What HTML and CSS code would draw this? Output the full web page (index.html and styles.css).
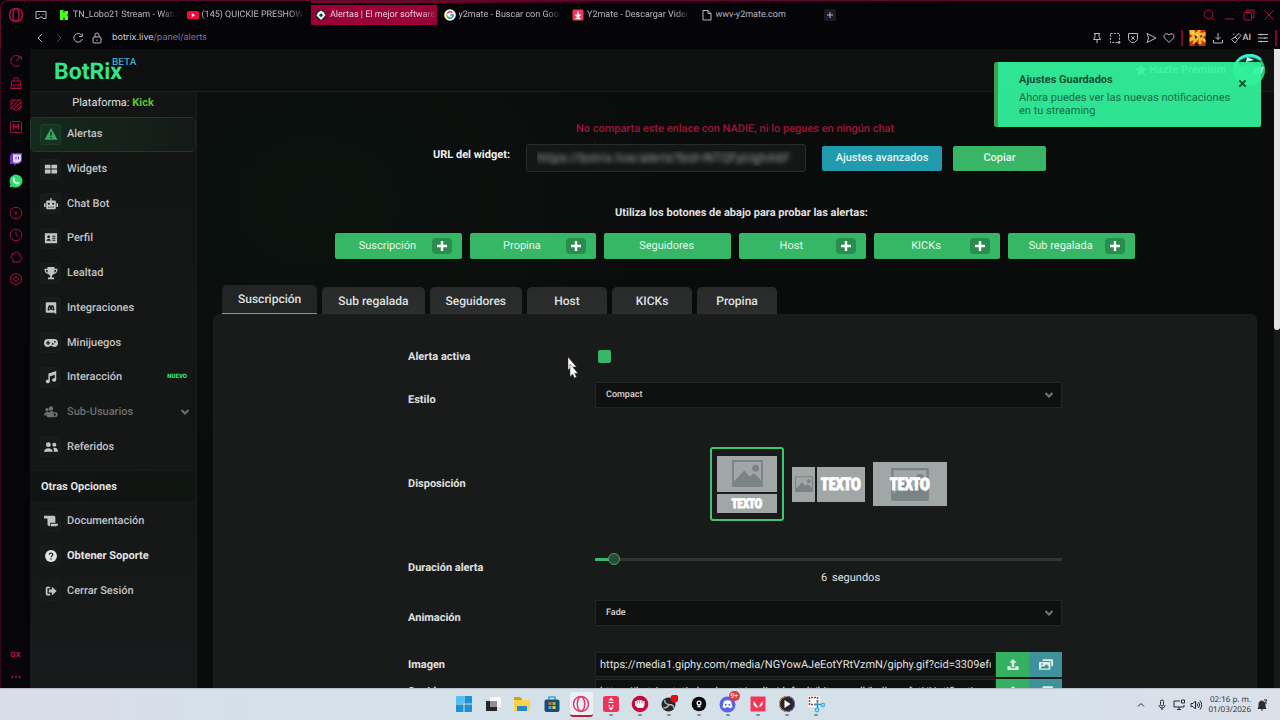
FILE: index.html
```html
<!DOCTYPE html>
<html lang="es">
<head>
<meta charset="utf-8">
<title>Alertas | BotRix</title>
<link rel="stylesheet" href="styles.css">
</head>
<body>
<svg class="defs" aria-hidden="true">
  <symbol id="plus" viewBox="0 0 10 10"><path d="M5 0v10M0 5h10" stroke="currentColor" stroke-width="2.4" fill="none"/></symbol>
  <symbol id="chev" viewBox="0 0 10 10"><path d="M1.500 3L5 6.500l3.500-3.500" stroke="currentColor" stroke-width="2" fill="none"/></symbol>
  <symbol id="upload" viewBox="0 0 14 14"><path d="M7 1l4 4.200H8.400V10H5.600V5.200H3z"/><path d="M1 9h3.500v2h5V9H13v4H1z"/></symbol>
  <symbol id="images" viewBox="0 0 16 14"><path d="M5 1h10a1 1 0 0 1 1 1v6a1 1 0 0 1-1 1h-1V5a2 2 0 0 0-2-2H4V2a1 1 0 0 1 1-1z"/><path fill-rule="evenodd" d="M1 4h11a1 1 0 0 1 1 1v7a1 1 0 0 1-1 1H1a1 1 0 0 1-1-1V5a1 1 0 0 1 1-1zm1 7.500h9V9L8.500 6.800 5.800 9.600 4.500 8.500 2 10.500zM3.300 5.500a1 1 0 1 0 0 2 1 1 0 0 0 0-2z"/></symbol>
  <symbol id="photo" viewBox="0 0 32 28"><path fill-rule="evenodd" d="M1 0h30a1 1 0 0 1 1 1v26a1 1 0 0 1-1 1H1a1 1 0 0 1-1-1V1a1 1 0 0 1 1-1zM2 2v20L12.500 11l6 6 4-3.500L30 21V2z"/><circle cx="24.500" cy="8.500" r="3.500"/></symbol>
</svg>

<header class="browser">
  <div class="tabbar">
    <button class="opera" aria-label="Opera"><svg viewBox="0 0 16 16"><circle cx="8" cy="8" r="6.500"/><ellipse cx="8" cy="8" rx="3" ry="6.200"/></svg></button>
    <button class="pane" aria-label="Espacio"><svg viewBox="0 0 12 12"><path d="M1 2.500h10v7H8L7 8H5L4 9.500H1zM3.500 5.500h1M7.500 5.500h1"/></svg></button>
    <nav class="tabs">
      <a href="#" class="tab"><svg viewBox="0 0 12 12"><path fill="#4dfb1c" d="M2 1h3.500v2.500h1V2H10v3L9 6l1 1v4H6.500V8.500h-1V11H2z"/></svg><span>TN_Lobo21 Stream - Watch</span></a>
      <a href="#" class="tab"><svg viewBox="0 0 12 12"><rect x="0" y="2" width="12" height="8.500" rx="2" fill="#f5073b"/><path d="M4.800 4.300v4L8 6.300z" fill="#fff"/></svg><span>(145) QUICKIE PRESHOW</span></a>
      <a href="#" class="tab current"><svg viewBox="0 0 12 12"><circle cx="6" cy="6" r="5.300" fill="#1c2023"/><path d="M3 3.500l3-2 3 2 1.500 3L6 11 1.500 6.500z" fill="#eef3f2"/><path d="M6 4.300l2 2-2 2-2-2z" fill="#24343a"/></svg><span>Alertas | El mejor software</span></a>
      <a href="#" class="tab"><svg viewBox="0 0 12 12"><circle cx="6" cy="6" r="5.800" fill="#fff"/><g fill="none" stroke-width="1.600"><path d="M8.300 3.700A3.200 3.200 0 0 0 3.200 4.500" stroke="#ea4335"/><path d="M3.200 4.500a3.200 3.200 0 0 0 0 3" stroke="#fbbc05"/><path d="M3.200 7.500A3.200 3.200 0 0 0 8.100 8.400" stroke="#34a853"/><path d="M8.100 8.400A3.200 3.200 0 0 0 9.200 6H6.200" stroke="#4285f4"/></g></svg><span>y2mate - Buscar con Google</span></a>
      <a href="#" class="tab"><svg viewBox="0 0 12 12"><rect x=".5" y=".5" width="11" height="11" rx="1.500" fill="#f0365b"/><path d="M6 2.500v4M3.500 5.500L6 8l2.500-2.500M3.500 9.500h5" stroke="#fff" stroke-width="1.500" fill="none"/></svg><span>Y2mate - Descargar Video</span></a>
      <a href="#" class="tab"><svg viewBox="0 0 12 12"><path stroke="#b9b8c0" d="M2 1.500h5L10 4.500v6.500H2zM7 1.500v3h3"/></svg><span>wwv-y2mate.com</span></a>
    </nav>
    <button class="newtab" aria-label="Nueva pestaña"><svg viewBox="0 0 10 10"><path d="M5 2v6M2 5h6"/></svg></button>
    <div class="winctl">
      <button aria-label="Buscar"><svg viewBox="0 0 12 12"><circle cx="5.500" cy="5.500" r="4.300"/><path d="M8.600 8.600L11 11"/></svg></button>
      <button aria-label="Minimizar"><svg viewBox="0 0 12 12"><path d="M2 10h9"/></svg></button>
      <button aria-label="Restaurar"><svg viewBox="0 0 12 12"><rect x="1" y="3.500" width="7.500" height="7.500" rx="1"/><path d="M3.500 3.500V1H11v7.500H8.500"/></svg></button>
      <button aria-label="Cerrar"><svg viewBox="0 0 12 12"><path d="M1.500 1.500l9 9M10.500 1.500l-9 9"/></svg></button>
    </div>
  </div>
  <div class="address">
    <div class="nav">
      <button aria-label="Atrás"><svg viewBox="0 0 12 12"><path d="M8 2L4 6l4 4"/></svg></button>
      <button class="dim" aria-label="Adelante"><svg viewBox="0 0 12 12"><path d="M4 2l4 4-4 4"/></svg></button>
      <button aria-label="Recargar"><svg viewBox="0 0 12 12"><path d="M9.800 3.500A4.300 4.300 0 1 0 10.300 7M10.300 1.500v3H7"/></svg></button>
      <button aria-label="Sitio seguro"><svg viewBox="0 0 12 12"><rect x="2" y="5" width="8" height="6" rx="1"/><path d="M4 5V3a2 2 0 0 1 4 0v2M6 7.500v1.500"/></svg></button>
    </div>
    <p class="url">botrix.live<span>/panel/alerts</span></p>
    <div class="tools">
      <button aria-label="Fijar"><svg viewBox="0 0 12 12"><path d="M3 1.500h6M4 1.500v3L2.500 7.500h7L8 4.500v-3M6 7.500V11"/></svg></button>
      <button aria-label="Captura"><svg viewBox="0 0 12 12"><path stroke-dasharray="2 1.300" d="M1.500 1.500h9v9h-9z"/><path d="M8.500 10.500h3M10 9v3"/></svg></button>
      <button aria-label="Bloqueador"><svg viewBox="0 0 12 12"><path d="M1.500 1.500h9v5c0 2-2 3.500-4.500 4.500C3.500 10 1.500 8.500 1.500 6.500zM4.300 4.300l3.400 3.400M7.700 4.300L4.300 7.700"/></svg></button>
      <button aria-label="Enviar"><svg viewBox="0 0 12 12"><path d="M2 1.500L11 6l-9 4.500L3.500 6z"/></svg></button>
      <button aria-label="Favorito"><svg viewBox="0 0 12 12"><path d="M6 10.500L1.500 6C-.5 3 3.500 0 6 3c2.500-3 6.500 0 4.500 3z"/></svg></button>
      <i class="bar"></i>
      <svg class="pic" viewBox="0 0 16 16"><path fill="#b83812" d="M0 0h16v16H0z"/><path fill="#fbb52c" d="M0 0h5l1 3 3-3h2v3l5-1v4l-3 1 3 3v3l-4-3v4H9V9L6 13l-3 1 1-4-4 2V8l3-2-3-2z"/><path fill="#f5e890" d="M1 1l3 1 1 3zM14 8l2 2-1 2zM8 3l1 4-2-1z"/><path fill="#3f0808" d="M5 5l3 2-2 2zM11 5l2 1-2 2zM6 12l3 2v2H5z"/></svg>
      <button aria-label="Descargas"><svg viewBox="0 0 12 12"><path d="M6 1v6.500M3.500 5L6 7.500 8.500 5M1.500 8v3h9V8"/></svg></button>
      <button class="ai"><svg viewBox="0 0 12 12"><path d="M5 5L9 1.500l2 2L7.500 7.500zM5 5L1.500 7.500 5 11l2.500-3.500M3.500 3l.500-1.500"/></svg>AI</button>
      <button aria-label="Menú"><svg viewBox="0 0 12 12"><path d="M1 2.500h10M1 6h10M1 9.500h10M4 1.500v2M8 5v2M4 8.500v2"/></svg></button>
      <i class="bar"></i>
    </div>
  </div>
</header>

<div class="window">
  <aside class="rail">
    <svg viewBox="0 0 14 14"><path d="M12 4A5.500 5.500 0 1 0 11 11M7 7l5-4M9 3h3.500v3"/></svg>
    <svg viewBox="0 0 14 14"><path d="M5 5V2h4v3M2.500 5h9v4h-9zM2.500 9L1.500 12.500h11L11.500 9M5 10v2.500M9 10v2.500"/></svg>
    <svg viewBox="0 0 14 14"><path d="M2 2h10v9H9l-2 2-2-2H2zM2 6l4-4M2 10l8-8M5 11l7-7M9 11l3-3"/></svg>
    <svg viewBox="0 0 14 14"><rect x="1.500" y="1.500" width="11" height="11" rx="1"/><path stroke-width="1.500" d="M4.500 9.500v-5L7 7.500l2.500-3v5"/></svg>
    <i class="gap"></i>
    <svg viewBox="0 0 14 14" stroke="none"><path fill="#6a35d5" d="M3 1h10v8l-3 3H7l-2 2v-2H1V4z"/><path fill="#e3d9fb" d="M4 2.500h8v6l-2 2H8L6.500 12v-1.500H4z"/><path fill="#6a35d5" d="M6.500 4.500h1v3h-1zM9 4.500h1v3H9z"/></svg>
    <svg viewBox="0 0 14 14" stroke="none"><path fill="#27e070" d="M7 .5A6.500 6.500 0 1 1 3.800 12.700L.5 13.500l1-3.200A6.500 6.500 0 0 1 7 .5z"/><path fill="#fff" d="M4.500 3.500L6 4.200v1.500l-.5.800 2 2 1-.7 2 1c-.5 2-2.500 2-4.500.7C4 8 3 5.500 4.500 3.500z"/></svg>
    <i class="gap"></i>
    <svg viewBox="0 0 14 14"><circle cx="7" cy="7" r="5.800"/><path fill="#c31247" d="M6.300 6v2L8 7z"/></svg>
    <svg viewBox="0 0 14 14"><circle cx="7" cy="7" r="5.800"/><path d="M7 3.500V7l2.500 1.500"/></svg>
    <svg viewBox="0 0 14 14"><path d="M3 4h2.500c0-3 4-3 4 0H11v2.500c2.500 0 2.500 3.500 0 3.500v2H4V9.500L1.500 7 3 6z"/></svg>
    <svg viewBox="0 0 14 14"><path d="M7 1l5.200 3v6L7 13l-5.200-3V4z"/><circle cx="7" cy="7" r="2.300"/></svg>
    <b>GX</b>
    <svg viewBox="0 0 14 14" stroke="none"><g fill="#c31247"><circle cx="3.500" cy="7" r="1"/><circle cx="7" cy="7" r="1"/><circle cx="10.500" cy="7" r="1"/></g></svg>
  </aside>

  <div class="app">
    <div class="topbar">
      <a href="#" class="logo">BotRix<sup>BETA</sup></a>
      <a href="#" class="premium"><svg viewBox="0 0 12 12"><path d="M6 0l1.800 3.900 4.200.5-3.100 2.900.800 4.200L6 9.400l-3.700 2.100.8-4.200L0 4.400l4.200-.5z"/></svg>Hazte Premium</a>
      <svg class="avatar" viewBox="0 0 32 32"><circle cx="16" cy="16" r="16" fill="#26c978"/><path fill="#18332f" d="M3 9Q15-1 28 7l-4 7-8-4-8 3z"/><path fill="none" stroke="#41ecdc" stroke-width="2.500" d="M2 11C8-1 22-1 28 6"/><path fill="#c9fff0" d="M14 3l7 3-8 2zM18 19l4-5 9-1-3 7z"/><circle cx="17" cy="15" r="4" fill="#19976b"/></svg>
    </div>

    <aside class="sidebar">
      <p class="platform">Plataforma: <b>Kick</b></p>
      <nav class="menu main-menu">
        <a href="#" class="on"><i><svg viewBox="0 0 16 16"><path fill-rule="evenodd" d="M8 1l7.500 13.500H.500zM7 5.500l.300 4.500h1.400L9 5.500zM8 11a1 1 0 1 0 0 2 1 1 0 0 0 0-2z"/></svg></i>Alertas</a>
        <a href="#"><i><svg viewBox="0 0 16 16"><path d="M1 3h6.500v4.500H1zM8.500 3H15v4.500H8.500zM1 8.500h6.500V13H1zM8.500 8.500H15V13H8.500z"/></svg></i>Widgets</a>
        <a href="#"><i><svg viewBox="0 0 16 16"><path fill-rule="evenodd" d="M7.300 1h1.400v3H12a1.500 1.500 0 0 1 1.500 1.500v7A1.500 1.500 0 0 1 12 14H4a1.500 1.500 0 0 1-1.500-1.500v-7A1.500 1.500 0 0 1 4 4h3.300zM5.500 6.500a1.200 1.200 0 1 0 0 2.400 1.200 1.200 0 0 0 0-2.400zm5 0a1.200 1.200 0 1 0 0 2.400 1.200 1.200 0 0 0 0-2.400zM4.500 11v1h2v-1zm2.700 0v1h1.600v-1zm2.300 0v1h2v-1zM0 7h1.800v4.500H0zM14.200 7H16v4.500h-1.800z"/></svg></i>Chat Bot</a>
        <a href="#"><i><svg viewBox="0 0 16 16"><path fill-rule="evenodd" d="M1 2.500h14V14H1zM5.300 5a1.600 1.600 0 1 0 0 3.200 1.600 1.600 0 0 0 0-3.200zM2.800 11h5c0-2.500-5-2.500-5 0zM9.500 5.500v1H13v-1zm0 2.300v1H13v-1zm0 2.200v1H13v-1z"/></svg></i>Perfil</a>
        <a href="#"><i><svg viewBox="0 0 16 16"><path fill-rule="evenodd" d="M4 1h8v2h3.500c0 4-1.500 5.500-4.300 6L9 11v2h2.500v2h-7v-2H7v-2L4.800 9C2 8.500.500 7 .500 3H4zM2 4.500c.300 1.700 1 2.500 2.300 2.900L4 4.500zm10 0l-.300 2.900C13 7 13.700 6.200 14 4.500z"/></svg></i>Lealtad</a>
        <a href="#"><i><svg viewBox="0 0 16 16"><path fill-rule="evenodd" d="M3 1.500h10a1 1 0 0 1 1 1V15l-2-1.700H3a1 1 0 0 1-1-1V2.500a1 1 0 0 1 1-1zM5 5.500L4 10l1.500 1 .8-1h3.400l.8 1L12 10l-1-4.500-2-.8-.5.600h-1L7 4.700zM6.300 7.300a.8.8 0 1 1 0 1.600.8.8 0 0 1 0-1.600zm3.400 0a.8.8 0 1 1 0 1.600.8.8 0 0 1 0-1.600z"/></svg></i>Integraciones</a>
        <a href="#"><i><svg viewBox="0 0 16 16"><path fill-rule="evenodd" d="M4.500 3.500h7a4.500 4.500 0 0 1 0 9C10 12.500 9.500 11 8 11s-2 1.500-3.500 1.500a4.500 4.500 0 0 1 0-9zM4 5.500V7.200H2.300v1.300H4v1.700h1.300V8.500H7V7.200H5.300V5.500zm6 2.500a1 1 0 1 0 0 2 1 1 0 0 0 0-2zm2.500-2.300a1 1 0 1 0 0 2 1 1 0 0 0 0-2z"/></svg></i>Minijuegos</a>
        <a href="#"><i><svg viewBox="0 0 16 16"><path d="M5 4l9-3v10.500a2.400 2 0 1 1-1.700-2V5.500L6.700 7.300v5.900A2.400 2 0 1 1 5 11.200z"/></svg></i>Interacción<small>NUEVO</small></a>
        <a href="#" class="off"><i><svg viewBox="0 0 16 16"><circle cx="3.500" cy="5.500" r="2"/><circle cx="8" cy="4" r="2.500"/><path d="M0 12c0-5 6-5 6-2l-1 2zM3.500 14C3.500 6 11 6.500 11 8l-2 3 1 3z"/><path fill-rule="evenodd" d="M12 7.500l1 1 1.500-.3.600 1.500.9 1.300-.9 1.300-.6 1.500-1.500-.3-1 1-1-1-1.500.3-.5-1.500L9 11l1-1.300.500-1.500 1.500.3zM12.300 9.700a1.300 1.300 0 1 0 0 2.600 1.300 1.300 0 0 0 0-2.600z"/></svg></i>Sub-Usuarios<svg class="arrow"><use href="#chev"/></svg></a>
        <a href="#"><i><svg viewBox="0 0 16 16"><circle cx="5" cy="5.300" r="2.800"/><circle cx="11.800" cy="5.500" r="2.300"/><path d="M0 13.500C0 8 10 8 10 13.500zM11 13.500h5c0-4.500-3.500-5-5.500-4.200 1 1 1 2.500.5 4.200z"/></svg></i>Referidos</a>
      </nav>
      <h2>Otras Opciones</h2>
      <nav class="menu">
        <a href="#"><i><svg viewBox="0 0 16 16"><path d="M.5 2H11a2 2 0 0 1 2 2v6H7v3.500A2 2 0 0 1 4 12V5H1.500A1.500 1.500 0 0 1 .5 2zM8 11h8a2.500 2.500 0 0 1-2.500 3H7.500z"/></svg></i>Documentación</a>
        <a href="#" class="strong"><i><svg viewBox="0 0 16 16"><circle cx="8" cy="8" r="6.800"/><path d="M6 6.500C6 4 10 4 10 6.300 10 8 8 7.800 8 9.500" fill="none" stroke="#191a1a" stroke-width="1.400"/><circle cx="8" cy="11.500" r=".9" fill="#191a1a"/></svg></i>Obtener Soporte</a>
        <a href="#"><i><svg viewBox="0 0 16 16"><path d="M7 3H3.500A1.500 1.500 0 0 0 2 4.500v7A1.500 1.500 0 0 0 3.500 13H7v-1.800H4V4.800h3z"/><path d="M5.500 6.300H9V3l5.500 5L9 13V9.700H5.500z"/></svg></i>Cerrar Sesión</a>
      </nav>
    </aside>

    <main class="content">
      <p class="warning">No comparta este enlace con NADIE, ni lo pegues en ningún chat</p>
      <div class="widget-url">
        <label for="wurl">URL del widget:</label>
        <input id="wurl" type="text" readonly value="https://botrix.live/alerts?bid=NTQFpUghA6F">
        <button class="info">Ajustes avanzados</button>
        <button class="ok">Copiar</button>
      </div>
      <p class="hint">Utiliza los botones de abajo para probar las alertas:</p>
      <div class="tests">
        <button><span>Suscripción</span><i><svg><use href="#plus"/></svg></i></button>
        <button><span>Propina</span><i><svg><use href="#plus"/></svg></i></button>
        <button><span>Seguidores</span></button>
        <button><span>Host</span><i><svg><use href="#plus"/></svg></i></button>
        <button><span>KICKs</span><i><svg><use href="#plus"/></svg></i></button>
        <button><span>Sub regalada</span><i><svg><use href="#plus"/></svg></i></button>
      </div>
      <div class="alert-tabs">
        <button class="on">Suscripción</button>
        <button>Sub regalada</button>
        <button>Seguidores</button>
        <button>Host</button>
        <button>KICKs</button>
        <button>Propina</button>
      </div>
      <section class="panel">
        <form class="form">
          <label for="active">Alerta activa</label>
          <div class="field"><input type="checkbox" id="active" checked></div>

          <label for="style">Estilo</label>
          <div class="field select"><select id="style"><option>Compact</option></select><svg><use href="#chev"/></svg></div>

          <span class="name">Disposición</span>
          <div class="field layouts">
            <button type="button" class="layout stack picked"><span class="box"><svg><use href="#photo"/></svg></span><span class="box word">TEXTO</span></button>
            <button type="button" class="layout side"><span class="box"><svg><use href="#photo"/></svg></span><span class="box word">TEXTO</span></button>
            <button type="button" class="layout over"><svg><use href="#photo"/></svg><span class="word">TEXTO</span></button>
          </div>

          <label for="time">Duración alerta</label>
          <div class="field slider"><input type="range" id="time" min="5" max="40" value="6"><output for="time"><span>6</span><span>segundos</span></output></div>

          <label for="anim">Animación</label>
          <div class="field select"><select id="anim"><option>Fade</option></select><svg><use href="#chev"/></svg></div>

          <label for="img">Imagen</label>
          <div class="field file"><input id="img" type="text" value="https://media1.giphy.com/media/NGYowAJeEotYRtVzmN/giphy.gif?cid=3309efc1"><button type="button" class="up" aria-label="Subir imagen"><svg><use href="#upload"/></svg></button><button type="button" class="lib" aria-label="Galería"><svg><use href="#images"/></svg></button></div>

          <label for="snd">Sonido</label>
          <div class="field file"><input id="snd" type="text" value="https://botrix-static.b-cdn.net/audio/default/bits-small/bell-confeti/Notification.mp3"><button type="button" class="up" aria-label="Subir sonido"><svg><use href="#upload"/></svg></button><button type="button" class="lib" aria-label="Sonidos"><svg><use href="#images"/></svg></button></div>
        </form>
      </section>
    </main>
    <div class="scroll"><i></i></div>

    <div class="toast" role="status">
      <strong>Ajustes Guardados</strong>
      <p>Ahora puedes ver las nuevas notificaciones en tu streaming</p>
      <button aria-label="Cerrar aviso"><svg viewBox="0 0 10 10"><path d="M1.500 1.500l7 7M8.500 1.500l-7 7"/></svg></button>
    </div>
  </div>
  <svg class="pointer" viewBox="0 0 12 22"><path d="M0 0v13l2.700-2.300L5 15l2-1-2-4h3.500z"/><path d="M2 7v12.500l2.700-2.300L6.500 21l2-1-1.800-3.800H10z"/></svg>
</div>

<footer class="taskbar">
  <div class="apps">
    <button aria-label="Inicio"><svg viewBox="0 0 18 18"><path fill="#1c93d6" d="M1 1h7.500v7.500H1zM9.500 1H17v7.500H9.500zM1 9.500h7.500V17H1zM9.500 9.500H17V17H9.500z"/><path fill="#54bff0" d="M1 1h7.500v7.500H1z"/></svg></button>
    <button aria-label="Vista de tareas"><svg viewBox="0 0 18 18"><path fill="#f7f7f7" d="M6 2h11v10H6z"/><path fill="#262629" d="M2 6h11v10H2z"/><path fill="#8f9295" d="M6 6h7v6H6z"/></svg></button>
    <button aria-label="Explorador"><svg viewBox="0 0 18 18"><path fill="#d99c15" d="M1 2h6l2 2v4H1z"/><path fill="#fbd24b" d="M1 5h16v11H1z"/><path fill="#2788cc" d="M4 11h10v5H4z"/></svg></button>
    <button aria-label="Tienda"><svg viewBox="0 0 18 18"><path d="M6 5V2h6v3" stroke="#2fa8e0" stroke-width="1.500" fill="none"/><rect x="1.500" y="4.500" width="15" height="12.500" rx="2" fill="#184f79"/><path fill="#f05a30" d="M5.500 7h3v3h-3z"/><path fill="#82c341" d="M9.500 7h3v3h-3z"/><path fill="#35a9e1" d="M5.500 11h3v3h-3z"/><path fill="#fcc630" d="M9.500 11h3v3h-3z"/></svg></button>
    <button class="open" aria-label="Opera GX"><svg viewBox="0 0 18 18"><g fill="none" stroke="#dc3d70" stroke-width="1.500"><circle cx="9" cy="9" r="7.500"/><ellipse cx="9" cy="9" rx="3.700" ry="7.200"/></g></svg></button>
    <button class="run" aria-label="Descargador"><svg viewBox="0 0 18 18"><rect x="1" y="1" width="16" height="16" rx="2.500" fill="#ec355c"/><path fill="#fff" d="M9 2.500l2.500 3h-5zM6.500 7h5v1h-5zM6.500 10h1.500v1.500H6.500zM10 10h1.500v1.500H10zM6.500 12.500h5L9 15.500z"/></svg></button>
    <button class="run" aria-label="Puño"><svg viewBox="0 0 18 18"><circle cx="9" cy="9" r="8.300" fill="#c80a38"/><path fill="#fff" d="M4 6h2V5h2v1l1-1h2v1h2.500v4.500L12 13H7L4 10.500z"/><path d="M6.500 6v2.500M8.700 6v2.500M11 6v2.500" stroke="#c80a38" stroke-width=".6"/></svg></button>
    <button class="run" aria-label="OBS"><svg viewBox="0 0 18 18"><circle cx="8.500" cy="9.500" r="7" fill="#27262b"/><path d="M9 9.500Q4 9 5 5M9 9.500Q7 14 3.500 12.500M9 9.500q5 0 5 4" stroke="#b9bbbe" stroke-width="1.400" fill="none"/><circle cx="14.500" cy="3.500" r="4" fill="#e90813"/></svg></button>
    <button class="run" aria-label="Cámara"><svg viewBox="0 0 18 18"><circle cx="9" cy="9" r="7.300" fill="#090b0e"/><circle cx="9" cy="8" r="1.900" fill="none" stroke="#fff" stroke-width="1.200"/><path fill="#fff" d="M7.800 10.500h2.400l.6 1.700H7.200z"/></svg></button>
    <button class="run" aria-label="Discord"><svg viewBox="0 0 18 18"><circle cx="8.500" cy="9.500" r="8" fill="#5663e5"/><path fill="#fff" d="M5 6l3-.7h1l3 .700 1.500 6-2.500 1.500-1-1.200H7l-1 1.200L3.500 12z"/><circle cx="6.800" cy="9.800" r="1" fill="#5663e5"/><circle cx="10.300" cy="9.800" r="1" fill="#5663e5"/></svg><span class="count">9+</span></button>
    <button class="run" aria-label="Valorant"><svg viewBox="0 0 18 18"><path fill="#f0365b" d="M1.500 1.500h15v15h-15z"/><path fill="#fff" d="M4.500 6l5 6.500H7L4.500 9.500zM13.500 6v3.500l-1.500 2H9.800z"/></svg></button>
    <button class="run" aria-label="Reproductor"><svg viewBox="0 0 18 18"><circle cx="9" cy="9" r="8" fill="#27262a"/><path d="M9 1.500A7.500 7.500 0 0 0 9 16.500" stroke="#e39f5b" fill="none"/><path d="M9 1.500A7.500 7.500 0 0 1 9 16.500" stroke="#7b60bd" fill="none"/><path fill="#fff" d="M6.500 5v8l6-4z"/></svg></button>
    <button class="run" aria-label="Recortes"><svg viewBox="0 0 18 18"><path fill="#fff" d="M1 1h12v11H1z"/><path stroke="#b43620" stroke-width="1.500" stroke-dasharray="2 1" fill="none" d="M9 9.500H2.500v-7h8V8"/><path stroke="#2c8fd0" stroke-width="1.600" fill="none" d="M10.500 5v8M7 9.500h8"/><circle cx="10" cy="15" r="1.700" fill="none" stroke="#44aee6" stroke-width="1.400"/><circle cx="16" cy="10" r="1.600" fill="none" stroke="#44aee6" stroke-width="1.400"/></svg></button>
  </div>
  <div class="tray">
    <svg viewBox="0 0 12 12"><path d="M3 7.500l3-3 3 3"/></svg>
    <svg viewBox="0 0 12 12"><rect x="4.500" y="1" width="3" height="6" rx="1.500"/><path d="M3 6c0 4 6 4 6 0M6 9v2"/></svg>
    <svg viewBox="0 0 12 12"><path d="M7 2H1v6h10V6M4 10.500h4M6 8v2.500M8.500 1h3v3h-3z"/></svg>
    <svg viewBox="0 0 12 12"><path d="M1 4.500h2L5.500 2v8L3 7.500H1zM7 4.500q1.200 1.500 0 3M8.500 3q2.500 3 0 6M10 1.500q3.500 4.500 0 9"/></svg>
    <p>02:16 p. m.<br>01/03/2026</p>
    <svg viewBox="0 0 12 12"><path fill="#2a2d31" d="M2 9.500L3 8V5c0-4 5-4 6 0v3l1 1.500zM5 11h2"/><path d="M8 1h3L8.500 4H11" stroke="#2a2d31"/></svg>
  </div>
</footer>
</body>
</html>
```
FILE: styles.css
```css
* { box-sizing: border-box; text-rendering: geometricPrecision; }
body {
  margin: 0;
  height: 100vh;
  display: flex;
  flex-direction: column;
  overflow: hidden;
  background: #050508;
  color: #e0e1e1;
  font: 12px/16px Roboto, "Liberation Sans", sans-serif;
}
p, h2 { margin: 0; }
a { color: inherit; text-decoration: none; }
button { border: 0; padding: 0; margin: 0; background: none; color: inherit; font: inherit; }
svg { display: block; flex: none; width: 12px; height: 12px; fill: currentColor; }
i { font-style: normal; }
.defs { position: absolute; width: 0; height: 0; }

/* Browser chrome */
.browser {
  flex: none;
  height: 49px;
  border-top: 1px solid #5c0b2b;
  border-left: 1px solid #5c0b2b;
  border-top-left-radius: 8px;
  background: linear-gradient(90deg, transparent 310px, #86002f 310px, #74002c 440px, #2a0615 600px, transparent 960px) 0 0 / 100% 2px no-repeat, #050508;
  font-size: 9px;
  color: #b9b8c0;
}
.browser svg { fill: none; stroke: currentColor; }
.tabbar { height: 28px; display: flex; align-items: center; padding: 0 5px 0 7px; }
.opera, .winctl { color: #b01043; }
.opera svg { width: 16px; height: 16px; stroke-width: 1.5; }
.pane { margin-left: 11px; }
.tabs { width: 768px; margin-left: 7px; display: grid; grid-template-columns: repeat(6, minmax(0, 1fr)); gap: 3px; }
.tab { display: flex; align-items: center; gap: 3px; height: 20px; padding: 0 4px; overflow: hidden; }
.tab svg { stroke: none; }
.tab span { flex: 1; min-width: 0; overflow: hidden; white-space: nowrap; -webkit-mask-image: linear-gradient(90deg, #000 86%, transparent); mask-image: linear-gradient(90deg, #000 86%, transparent); }
.tab:last-child span { -webkit-mask-image: none; mask-image: none; }
.tab.current { background: #980037; color: #e8cdd7; border-radius: 1px; padding-right: 0; }
.newtab { width: 12px; height: 12px; margin-left: 2px; background: #1b1a28; border-radius: 2px; display: grid; place-items: center; }
.newtab svg { width: 10px; height: 10px; }
.winctl { margin-left: auto; display: flex; gap: 8px; }
.address { height: 17px; display: flex; align-items: center; padding-right: 3px; }
.nav { display: flex; gap: 7px; padding-left: 33px; }
.dim { color: #4b4a55; }
.url { margin-left: 9px; color: #d0cfd6; font-family: Inter, "Liberation Sans", sans-serif; }
.url span { color: #81739e; }
.tools { margin-left: auto; display: flex; align-items: center; gap: 6px; }
.bar { width: 2px; height: 16px; background: #7c0832; }
.browser .pic { width: 17px; height: 16px; stroke: none; }
.ai { display: flex; align-items: center; font-weight: 600; }

/* Vertical rail */
.window { flex: 1; min-height: 0; display: flex; position: relative; }
.rail {
  width: 30px;
  flex: none;
  display: flex;
  flex-direction: column;
  padding-top: 1px;
  border-left: 1px solid #35081d;
  color: #c31247;
  background: linear-gradient(90deg, #08050a, #050508);
}
.rail svg { width: 30px; height: 22px; padding: 4px 0; fill: none; stroke: #a80f40; }
.rail svg[stroke="none"] { stroke: none; }
.rail .gap { height: 10px; }
.rail b { margin-top: auto; height: 22px; font: 700 7px/22px Inter, sans-serif; text-align: center; }

/* Application frame */
.app {
  flex: 1;
  min-width: 0;
  position: relative;
  display: grid;
  grid-template: 43px minmax(0, 1fr) / 167px minmax(0, 1fr) 6px;
  background: #0a0b0b;
}
.topbar {
  grid-column: 1 / 3;
  display: flex;
  align-items: center;
  padding: 0 9px 0 24px;
  border-bottom: 1px solid #1b1e1c;
  background: #0e0f0f;
}
.logo { display: flex; padding-top: 3px; font-size: 23px; line-height: 30px; font-weight: 700; color: #36e28a; }
.logo sup { margin-left: -10px; font-size: 10px; line-height: 12px; font-weight: 500; color: #41a9cf; }
.premium { margin-left: auto; display: flex; align-items: center; gap: 2px; font-size: 11px; font-weight: 700; color: #b6ffe0; }
.avatar { width: 32px; height: 32px; margin-left: 7px; }
.scroll { grid-column: 3; grid-row: 1 / 3; background: #17181a; }
.scroll i { display: block; height: 44%; background: #e6e6e6; border-radius: 0 0 3px 3px; }

.sidebar { background: linear-gradient(#131414, #151616 60%, #181b1b); border-right: 1px solid #1b1d1c; }
.platform { padding: 3px 0 6px; text-align: center; font-size: 11px; }
.platform b { color: #55c92e; }
.menu { display: grid; grid-auto-rows: 1fr; height: 104px; }
.main-menu { height: 347px; }
.menu a { display: flex; align-items: center; gap: 6px; padding: 0 5px 0 9px; border: 1px solid transparent; color: #c3c4c4; font-size: 11px; font-weight: 500; }
.menu i { width: 21px; height: 21px; display: grid; place-items: center; border-radius: 3px; background: #191a1a; border: 1px solid #1c1d1d; }
.menu i svg { width: 14px; height: 14px; }
.menu .on { border-color: #1d3b2b; border-right-color: transparent; border-radius: 5px; background: linear-gradient(90deg, #14291d, #152019 60%, #151a17); }
.menu .on i { background: #16331f; border-color: #1c4029; color: #3ba363; }
.menu .off { color: #6f7070; }
.menu .off i { background: none; border-color: transparent; }
.menu .strong { color: #e3e4e4; font-weight: 700; }
.menu small { margin-left: auto; padding-right: 3px; font-size: 6px; font-weight: 900; color: #2ee67c; }
.menu .arrow { margin-left: auto; width: 10px; height: 10px; }
.sidebar h2 { margin: 6px 0 1px; padding: 8px 11px 7px; border-top: 1px solid #191d1a; border-bottom: 1px solid #191d1a; background: linear-gradient(90deg, #121413, #0f1511); font-size: 11px; line-height: 16px; font-weight: 700; }

/* Content */
.content {
  overflow: hidden;
  padding: 29px 17px 0 16px;
  background: radial-gradient(ellipse 420px 330px at 120px 110px, #0b120e, #0a0b0b);
}
.warning { text-align: center; color: #a01338; font-size: 11px; font-weight: 500; }
.widget-url { display: flex; justify-content: center; align-items: center; margin: 7px 0 0 9px; }
.widget-url label { align-self: flex-start; margin: 3px 16px 0 0; font-size: 11px; font-weight: 700; color: #f0f1f1; }
.widget-url input { width: 280px; height: 28px; margin-right: 16px; padding: 0 10px; border: 1px solid #292a2a; border-radius: 3px; background: #151616; font: 13px Roboto, sans-serif; color: transparent; text-shadow: 0 0 5px #a5a6a6; }
.widget-url button { height: 25px; border-radius: 2px; color: #e4f6f0; font-size: 11px; font-weight: 500; }
.widget-url .info { width: 120px; margin-right: 11px; background: #229aae; }
.widget-url .ok { width: 93px; background: #38b665; }
.hint { margin: 33px 0 0 13px; text-align: center; font-size: 11px; font-weight: 700; }
.tests { max-width: 800px; margin: 12px auto 0; display: grid; grid-template-columns: repeat(6, minmax(0, 1fr)); gap: 8px; }
.tests button { height: 26px; padding: 0 10px 0 8px; display: flex; align-items: center; border-radius: 2px; background: #36b766; color: #e2f7e9; font-size: 11px; }
.tests span { flex: 1; }
.tests i { width: 20px; height: 16px; display: grid; place-items: center; border-radius: 4px; background: #2b8c50; color: #fff; }
.tests i svg { width: 10px; height: 10px; }
.alert-tabs { display: flex; align-items: flex-end; gap: 5px; padding-left: 9px; margin-top: 26px; }
.alert-tabs button { min-width: 80px; height: 27px; padding: 0 16px; border-radius: 5px 5px 0 0; background: linear-gradient(#292a2a, #2c2d2d); font-weight: 500; color: #dfe0e0; }
.alert-tabs .on { height: 29px; border-bottom: 1px solid #3cbd6b; background: #232424; }
.panel { border-radius: 6px; background: #191a1a; border: 1px solid #1d1e1e; height: 600px; }
.form { max-width: 654px; margin: 0 auto; padding-top: 30px; display: grid; grid-template-columns: 187px minmax(0, 1fr); grid-template-rows: 24px 60px 102px 61px 50px 25px 25px; row-gap: 2px; font-size: 11px; }
.form > label, .name { align-self: center; font-weight: 700; line-height: 16px; }
.form > label[for="style"] { align-self: start; padding-top: 21px; }
.form > label[for="anim"] { align-self: start; padding-top: 10px; }
.form > label[for="time"] { align-self: start; padding-top: 23px; }
.field { min-width: 0; }
.field [type="checkbox"] { appearance: none; display: block; width: 13px; height: 13px; margin: 5px 0 0 3px; border-radius: 2px; background: #39b768; }
.select { position: relative; align-self: start; }
.select:has(#style) { margin-top: 11px; }
.select select { appearance: none; display: block; width: 100%; height: 26px; padding: 0 10px; border: 1px solid #242525; border-radius: 0; background: #0f1010; color: #d5d6d6; font: 500 9px Roboto, sans-serif; }
.select svg { position: absolute; right: 8px; top: 8px; width: 10px; height: 10px; color: #777878; }
.layouts { align-self: center; display: flex; justify-content: center; align-items: center; gap: 8px; }
.layout { color: #7b8484; }
.box, .over { background: #a1a6a7; }
.box { display: grid; place-items: center; }
.word { font: 700 17px/18px Impact, "Open Sans Condensed", Roboto, sans-serif; font-stretch: normal; color: #fff; -webkit-text-stroke: 1px #fff; }
.stack { width: 74px; height: 74px; padding: 5px; border: 2px solid #3fc46f; border-radius: 3px; display: grid; grid-template-rows: 36px 19px; align-content: center; gap: 2px; }
.stack svg { width: 31px; height: 27px; }
.stack .word { font-size: 13px; }
.side { display: grid; grid-template-columns: 23px 48px; grid-template-rows: 35px; gap: 2px; }
.side svg { width: 18px; height: 16px; }
.over { width: 74px; height: 44px; display: grid; place-items: center; }
.over > * { grid-area: 1 / 1; }
.over svg { width: 38px; height: 33px; }
.slider { padding-top: 16px; }
.slider input { appearance: none; display: block; width: 100%; height: 12px; margin: 0; background: linear-gradient(90deg, #35b968 18px, #333434 18px) 0 50% / 100% 3px no-repeat; }
.slider input::-webkit-slider-thumb { appearance: none; width: 12px; height: 12px; border: 1px solid #40a568; border-radius: 50%; background: #2b4a3a; }
.slider output { display: flex; justify-content: center; gap: 5px; padding: 5px 0 0 44px; }
.file { display: flex; height: 25px; }
.file input { flex: 1; min-width: 0; padding: 0 4px; border: 1px solid #242525; background: #0f1010; color: #e0e1e1; font: 11px Roboto, sans-serif; }
.file button { width: 33px; display: grid; place-items: center; color: #dcefe5; }
.file svg { width: 14px; height: 13px; }
.file .up { background: #35b061; }
.file .lib { background: #3f929b; }

/* Overlays */
.toast { position: absolute; top: 13px; right: 19px; width: 267px; height: 65px; padding: 10px 30px 8px 21px; border-left: 4px solid #419e52; border-radius: 2px; background: rgba(49, 244, 156, .93); color: #176f48; font-size: 11px; line-height: 13px; }
.toast strong { display: block; line-height: 15px; color: #115132; }
.toast p { margin-top: 4px; }
.toast button { position: absolute; right: 14px; top: 17px; }
.toast svg { width: 9px; height: 9px; stroke: #124a30; stroke-width: 2; }
.pointer { position: absolute; left: 568px; top: 308px; width: 12px; height: 22px; fill: #fff; stroke: #333; stroke-width: .5; }

/* Taskbar */
.taskbar { flex: none; height: 32px; display: grid; grid-template-columns: 1fr 382px 1fr; border-top: 1px solid #b9c0c6; background: linear-gradient(90deg, #dadde9, #d4e1e9 20%, #d5e1e9 80%, #dbe0e9); color: #26282b; }
.apps { grid-column: 2; display: grid; grid-template-columns: repeat(13, 1fr); }
.apps button { position: relative; display: flex; justify-content: center; padding-top: 6px; }
.apps svg { width: 18px; height: 18px; }
.apps .open { margin: 3px; padding-top: 3px; border-radius: 3px; background: #ecf0f6; border-bottom: 2px solid #b4232f; }
.run::after { content: ""; position: absolute; bottom: 4px; width: 4px; height: 2px; border-radius: 1px; background: #83898e; }
.count { position: absolute; right: 3px; top: 2px; width: 11px; height: 10px; border-radius: 5px; background: #d63c4a; color: #fff; font: 7px/10px Roboto, sans-serif; }
.tray { grid-column: 3; justify-self: end; display: flex; align-items: center; gap: 5px; padding-right: 12px; font: 8px/10px "Open Sans", "Noto Sans", sans-serif; text-align: right; }
.tray svg { fill: none; stroke: currentColor; }
.tray svg:first-child { margin-right: 4px; }
.tray p { margin-left: 2px; }
```
